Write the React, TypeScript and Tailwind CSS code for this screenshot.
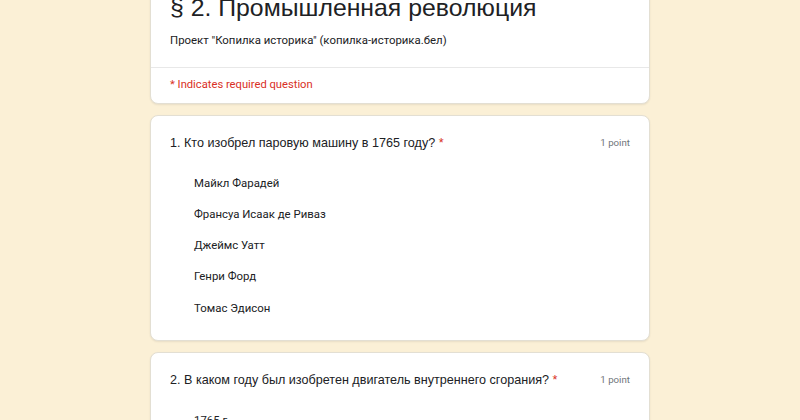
import React from "react";

const roboto = { fontFamily: "Roboto, 'Liberation Sans', Arial, sans-serif" };
const arial = { fontFamily: "'Liberation Sans', Arial, sans-serif" };

function Question({ title, options }: { title: string; options: string[] }) {
  return (
    <div className="rounded-lg bg-white border border-[#e3dfd3] shadow-[0_1px_2px_rgba(0,0,0,0.08)] px-[19px] pt-[18px] pb-[16.5px]">
      <div className="flex items-start justify-between h-[18px]">
        <div className="whitespace-nowrap text-[12.6px] leading-[18px] text-[#202124]" style={arial}>
          {title} <span className="text-[#d93025]">*</span>
        </div>
        <div className="whitespace-nowrap text-[9.7px] leading-[18px] text-[#70757a]" style={roboto}>1 point</div>
      </div>
      <div className="mt-[15.5px] pl-[24px] flex flex-col">
        {options.map((o) => (
          <div key={o} className="h-[31.3px] flex items-center text-[11.4px] text-[#202124]" style={roboto}>
            {o}
          </div>
        ))}
      </div>
    </div>
  );
}

export default function App() {
  return (
    <div className="w-[800px] h-[420px] overflow-hidden bg-[#fbf0d6]">
      <div className="w-[500px] mx-auto -mt-[33px] flex flex-col gap-[11px]">
        <div className="rounded-lg bg-white border border-[#e3dfd3] shadow-[0_1px_2px_rgba(0,0,0,0.08)]">
          <div className="px-[19px] pt-[24px] pb-[19px]">
            <div className="whitespace-nowrap text-[24.8px] leading-[32px] text-[#202124]" style={arial}>
              § 2. Промышленная революция
            </div>
            <div className="mt-[8px] text-[11.4px] leading-[16px] text-[#202124]" style={roboto}>
              Проект "Копилка историка" (копилка-историка.бел)
            </div>
          </div>
          <div className="border-t border-[#e8e8e8] px-[19px] pt-[9px] pb-[10px]">
            <div className="text-[11.2px] leading-[16px] text-[#d93025]" style={roboto}>
              * Indicates required question
            </div>
          </div>
        </div>
        <Question
          title="1. Кто изобрел паровую машину в 1765 году?"
          options={["Майкл Фарадей", "Франсуа Исаак де Риваз", "Джеймс Уатт", "Генри Форд", "Томас Эдисон"]}
        />
        <Question
          title="2. В каком году был изобретен двигатель внутреннего сгорания?"
          options={["1765 г.", "1807 г.", "1860 г.", "1885 г."]}
        />
      </div>
    </div>
  );
}
